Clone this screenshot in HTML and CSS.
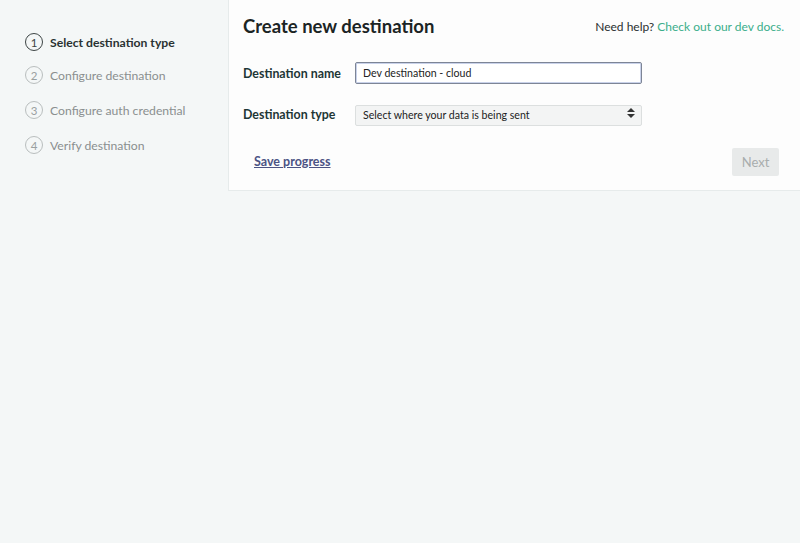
FILE: index.html
```html
<!DOCTYPE html>
<html lang="en">
<head>
  <meta charset="UTF-8">
  <meta name="viewport" content="width=device-width, initial-scale=1.0">
  <title>Create new destination</title>
  <link rel="stylesheet" href="styles.css">
</head>
<body>
  <div class="layout">
    <ol class="steps">
      <li class="step active"><span class="step-num">1</span> Select destination type</li>
      <li class="step"><span class="step-num">2</span> Configure destination</li>
      <li class="step"><span class="step-num">3</span> Configure auth credential</li>
      <li class="step"><span class="step-num">4</span> Verify destination</li>
    </ol>

    <div class="panel">
      <div class="panel-header">
        <h2>Create new destination</h2>
        <p class="help">Need help? <a href="#">Check out our dev docs.</a></p>
      </div>

      <form id="destinationForm">
        <div class="form-row">
          <label for="destName">Destination name</label>
          <input type="text" id="destName" value="Dev destination - cloud">
        </div>

        <div class="form-row">
          <label for="destType">Destination type</label>
          <div class="select-wrap">
            <select id="destType">
              <option value="" selected>Select where your data is being sent</option>
            </select>
            <span class="select-arrows"></span>
          </div>
        </div>

        <div class="form-actions">
          <a href="#" class="save-link">Save progress</a>
          <button type="submit" disabled>Next</button>
        </div>
      </form>
    </div>
  </div>
</body>
</html>
```

FILE: styles.css
```css
/* General Styles */
body {
  font-family: Lato, "Open Sans", sans-serif;
  background-color: #f4f7f7;
  margin: 0;
  padding: 0;
  color: #1f2b2b;
}

.layout {
  display: flex;
  align-items: flex-start;
}

/* Steps sidebar */
.steps {
  list-style: none;
  margin: 0;
  padding: 33px 0 0 25px;
  width: 203px;
}

.step {
  display: flex;
  align-items: center;
  height: 18px;
  margin-bottom: 17px;
  font-size: 12.2px;
  color: #8a8f8f;
}

.step:first-child {
  margin-bottom: 15px;
}

.step-num {
  display: inline-flex;
  justify-content: center;
  align-items: center;
  width: 16px;
  height: 16px;
  border: 1px solid #b9bebe;
  border-radius: 50%;
  margin-right: 7px;
  font-size: 11.5px;
  color: #9aa0a0;
}

.step.active {
  color: #2a3232;
  font-weight: 700;
}

.step.active .step-num {
  border-color: #3d4545;
  color: #3d4545;
  font-weight: 400;
}

/* Main panel */
.panel {
  flex: 1;
  background: #fdfdfd;
  border-left: 1px solid #e6ebeb;
  border-bottom: 1px solid #e6ebeb;
  padding: 15px 21px 14px 14px;
}

.panel-header {
  display: flex;
  justify-content: space-between;
  align-items: center;
  margin-bottom: 25px;
  padding-right: 16px;
  margin-right: -16px;
}

.panel-header h2 {
  margin: 0;
  font-size: 18.5px;
  font-weight: 700;
  color: #1b2424;
}

.help {
  margin: 0 -5px 0 0;
  font-size: 12px;
  color: #2a3030;
}

.help a {
  color: #3bae8b;
  text-decoration: none;
}

.form-row {
  display: flex;
  align-items: center;
  margin-bottom: 19px;
}

.form-row label {
  width: 112px;
  font-size: 12.4px;
  font-weight: 700;
  color: #1e3636;
}

.form-row input,
.form-row select {
  box-sizing: border-box;
  width: 287px;
  height: 22px;
  font-family: inherit;
  font-size: 10.6px;
  color: #222;
  border-radius: 2px;
}

.form-row input {
  padding: 0 7px;
  border: 1px solid #7d8596;
  box-shadow: inset 0 0 0 1px #c9d2ea;
  outline: none;
  background: #fff;
}

.select-wrap {
  position: relative;
}

.form-row select {
  appearance: none;
  -webkit-appearance: none;
  padding: 0 7px;
  height: 21px;
  border: 1px solid #dcdfdf;
  background: #f3f4f4;
}

.select-arrows {
  position: absolute;
  right: 7px;
  top: 5px;
  width: 0;
  height: 0;
  border-left: 4px solid transparent;
  border-right: 4px solid transparent;
  border-bottom: 4px solid #333;
}

.select-arrows::after {
  content: "";
  position: absolute;
  left: -4px;
  top: 6px;
  border-left: 4px solid transparent;
  border-right: 4px solid transparent;
  border-top: 4px solid #333;
}

.form-actions {
  display: flex;
  justify-content: space-between;
  align-items: center;
  padding-left: 11px;
  margin-top: 22px;
}

.save-link {
  font-size: 12.5px;
  font-weight: 700;
  color: #4c5384;
  text-decoration: underline;
}

.form-actions button {
  width: 47px;
  height: 28px;
  border: none;
  border-radius: 2px;
  background-color: #e8eaea;
  color: #a9adad;
  font-family: inherit;
  font-size: 13px;
}
```
